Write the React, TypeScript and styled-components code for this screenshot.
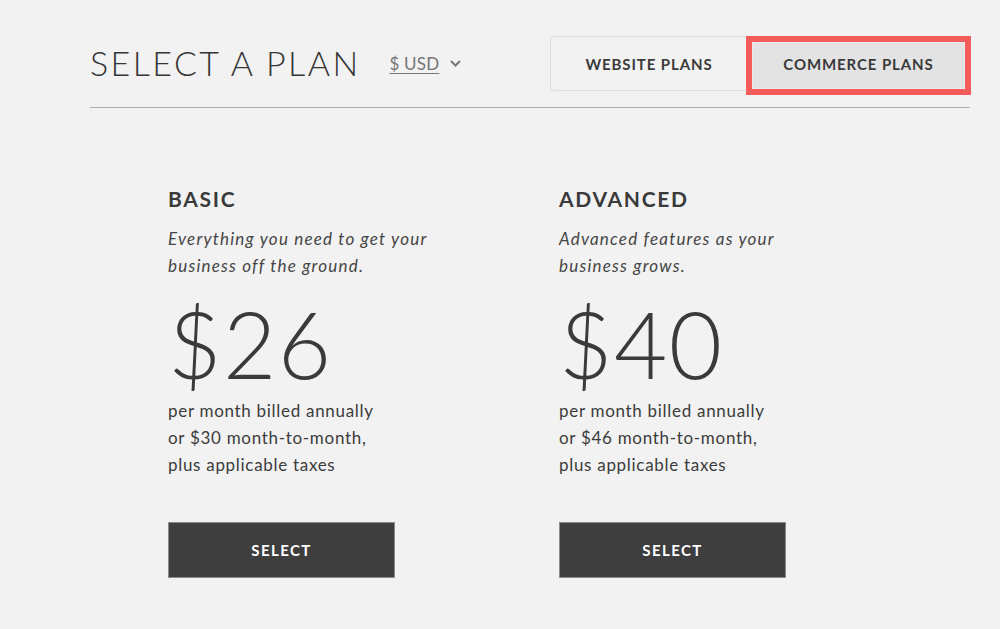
import React, { useState } from 'react';
import styled, { createGlobalStyle } from 'styled-components';

const GlobalStyle = createGlobalStyle`
  html, body {
    margin: 0;
    padding: 0;
    background: #f2f2f2;
  }
  body {
    font-family: Lato, 'Noto Sans', sans-serif;
    color: #3c3c3c;
  }
`;

const Page = styled.div`
  width: 1000px;
  min-height: 629px;
  background: #f2f2f2;
  box-sizing: border-box;
  padding: 36px 30px 0 90px;
`;

const Header = styled.header`
  display: flex;
  align-items: center;
  justify-content: space-between;
  padding-bottom: 16px;
  border-bottom: 1px solid #ababab;
`;

const TitleGroup = styled.div`
  display: flex;
  align-items: center;
  padding-bottom: 1px;
`;

const Title = styled.h1`
  margin: 0;
  font-family: Lato, sans-serif;
  font-weight: 300;
  font-size: 34px;
  line-height: 40px;
  letter-spacing: 2.4px;
  color: #353535;
`;

const Currency = styled.button`
  display: flex;
  align-items: center;
  gap: 11px;
  margin-left: 29px;
  padding: 0;
  border: 0;
  background: none;
  font-family: Lato, sans-serif;
  font-size: 17px;
  letter-spacing: 0.2px;
  color: #767676;
  cursor: pointer;

  span {
    text-decoration: underline;
    text-underline-offset: 3px;
  }
`;

const Tabs = styled.div`
  display: flex;
  align-items: flex-start;
  height: 55px;
  box-sizing: border-box;
  border: 1px solid #dedede;
  border-radius: 4px;
  margin-right: 4px;
`;

const Tab = styled.button<{ $active?: boolean; $width: number }>`
  width: ${({ $width }) => $width}px;
  height: ${({ $active }) => ($active ? 47 : 53)}px;
  margin-top: ${({ $active }) => ($active ? 5 : 0)}px;
  margin-left: ${({ $active }) => ($active ? 5 : 0)}px;
  padding: 0 0 ${({ $active }) => ($active ? 4 : 0)}px;
  box-sizing: border-box;
  border: ${({ $active }) => ($active ? '1px solid #ececec' : '0')};
  outline: ${({ $active }) => ($active ? '6px solid #f45c5c' : 'none')};
  background: ${({ $active }) => ($active ? '#e3e3e3' : 'transparent')};
  font-family: Lato, sans-serif;
  font-weight: 700;
  font-size: 15px;
  letter-spacing: 0.9px;
  color: #3a3a3a;
  cursor: pointer;
`;

const Plans = styled.div`
  display: grid;
  grid-template-columns: 391px 391px;
  padding: 79px 0 0 78px;
`;

const Plan = styled.div`
  display: flex;
  flex-direction: column;
  align-items: flex-start;
`;

const PlanName = styled.h2`
  margin: 0;
  font-size: 21px;
  line-height: 24px;
  font-weight: 700;
  letter-spacing: 1.7px;
  color: #3a3a3a;
`;

const Description = styled.p`
  margin: 14px 0 0;
  width: 320px;
  font-size: 17px;
  line-height: 27px;
  font-style: italic;
  letter-spacing: 1.2px;
  color: #454545;
`;

const Price = styled.div`
  margin-top: 19px;
  font-size: 92px;
  line-height: 92px;
  font-weight: 300;
  letter-spacing: 1.5px;
  color: #3a3a3a;
`;

const Terms = styled.p`
  margin: 7px 0 0;
  font-size: 17px;
  line-height: 27px;
  letter-spacing: 0.7px;
  color: #3c3c3c;
`;

const SelectButton = styled.button`
  margin-top: 44px;
  width: 227px;
  height: 56px;
  border: 1px solid #8a8a8a;
  background: #3e3e3e;
  color: #fff;
  font-family: Lato, sans-serif;
  font-weight: 700;
  font-size: 15px;
  letter-spacing: 1.4px;
  cursor: pointer;
`;

const Chevron = () => (
  <svg width="11" height="7" viewBox="0 0 11 7" fill="none">
    <path d="M1 1l4.5 4.5L10 1" stroke="#777" strokeWidth="2" />
  </svg>
);

const plans = [
  {
    name: 'BASIC',
    description: ['Everything you need to get your', 'business off the ground.'],
    price: 26,
    monthly: 30,
  },
  {
    name: 'ADVANCED',
    description: ['Advanced features as your', 'business grows.'],
    price: 40,
    monthly: 46,
  },
];

const App = () => {
  const [tab, setTab] = useState('commerce');

  return (
    <Page>
      <GlobalStyle />
      <Header>
        <TitleGroup>
          <Title>SELECT A PLAN</Title>
          <Currency>
            <span>$ USD</span>
            <Chevron />
          </Currency>
        </TitleGroup>
        <Tabs>
          <Tab $width={196} $active={tab === 'website'} onClick={() => setTab('website')}>
            WEBSITE PLANS
          </Tab>
          <Tab $width={213} $active={tab === 'commerce'} onClick={() => setTab('commerce')}>
            COMMERCE PLANS
          </Tab>
        </Tabs>
      </Header>
      <Plans>
        {plans.map((plan) => (
          <Plan key={plan.name}>
            <PlanName>{plan.name}</PlanName>
            <Description>
              {plan.description[0]}
              <br />
              {plan.description[1]}
            </Description>
            <Price>${plan.price}</Price>
            <Terms>
              per month billed annually
              <br />
              or ${plan.monthly} month-to-month,
              <br />
              plus applicable taxes
            </Terms>
            <SelectButton>SELECT</SelectButton>
          </Plan>
        ))}
      </Plans>
    </Page>
  );
};

export default App;
